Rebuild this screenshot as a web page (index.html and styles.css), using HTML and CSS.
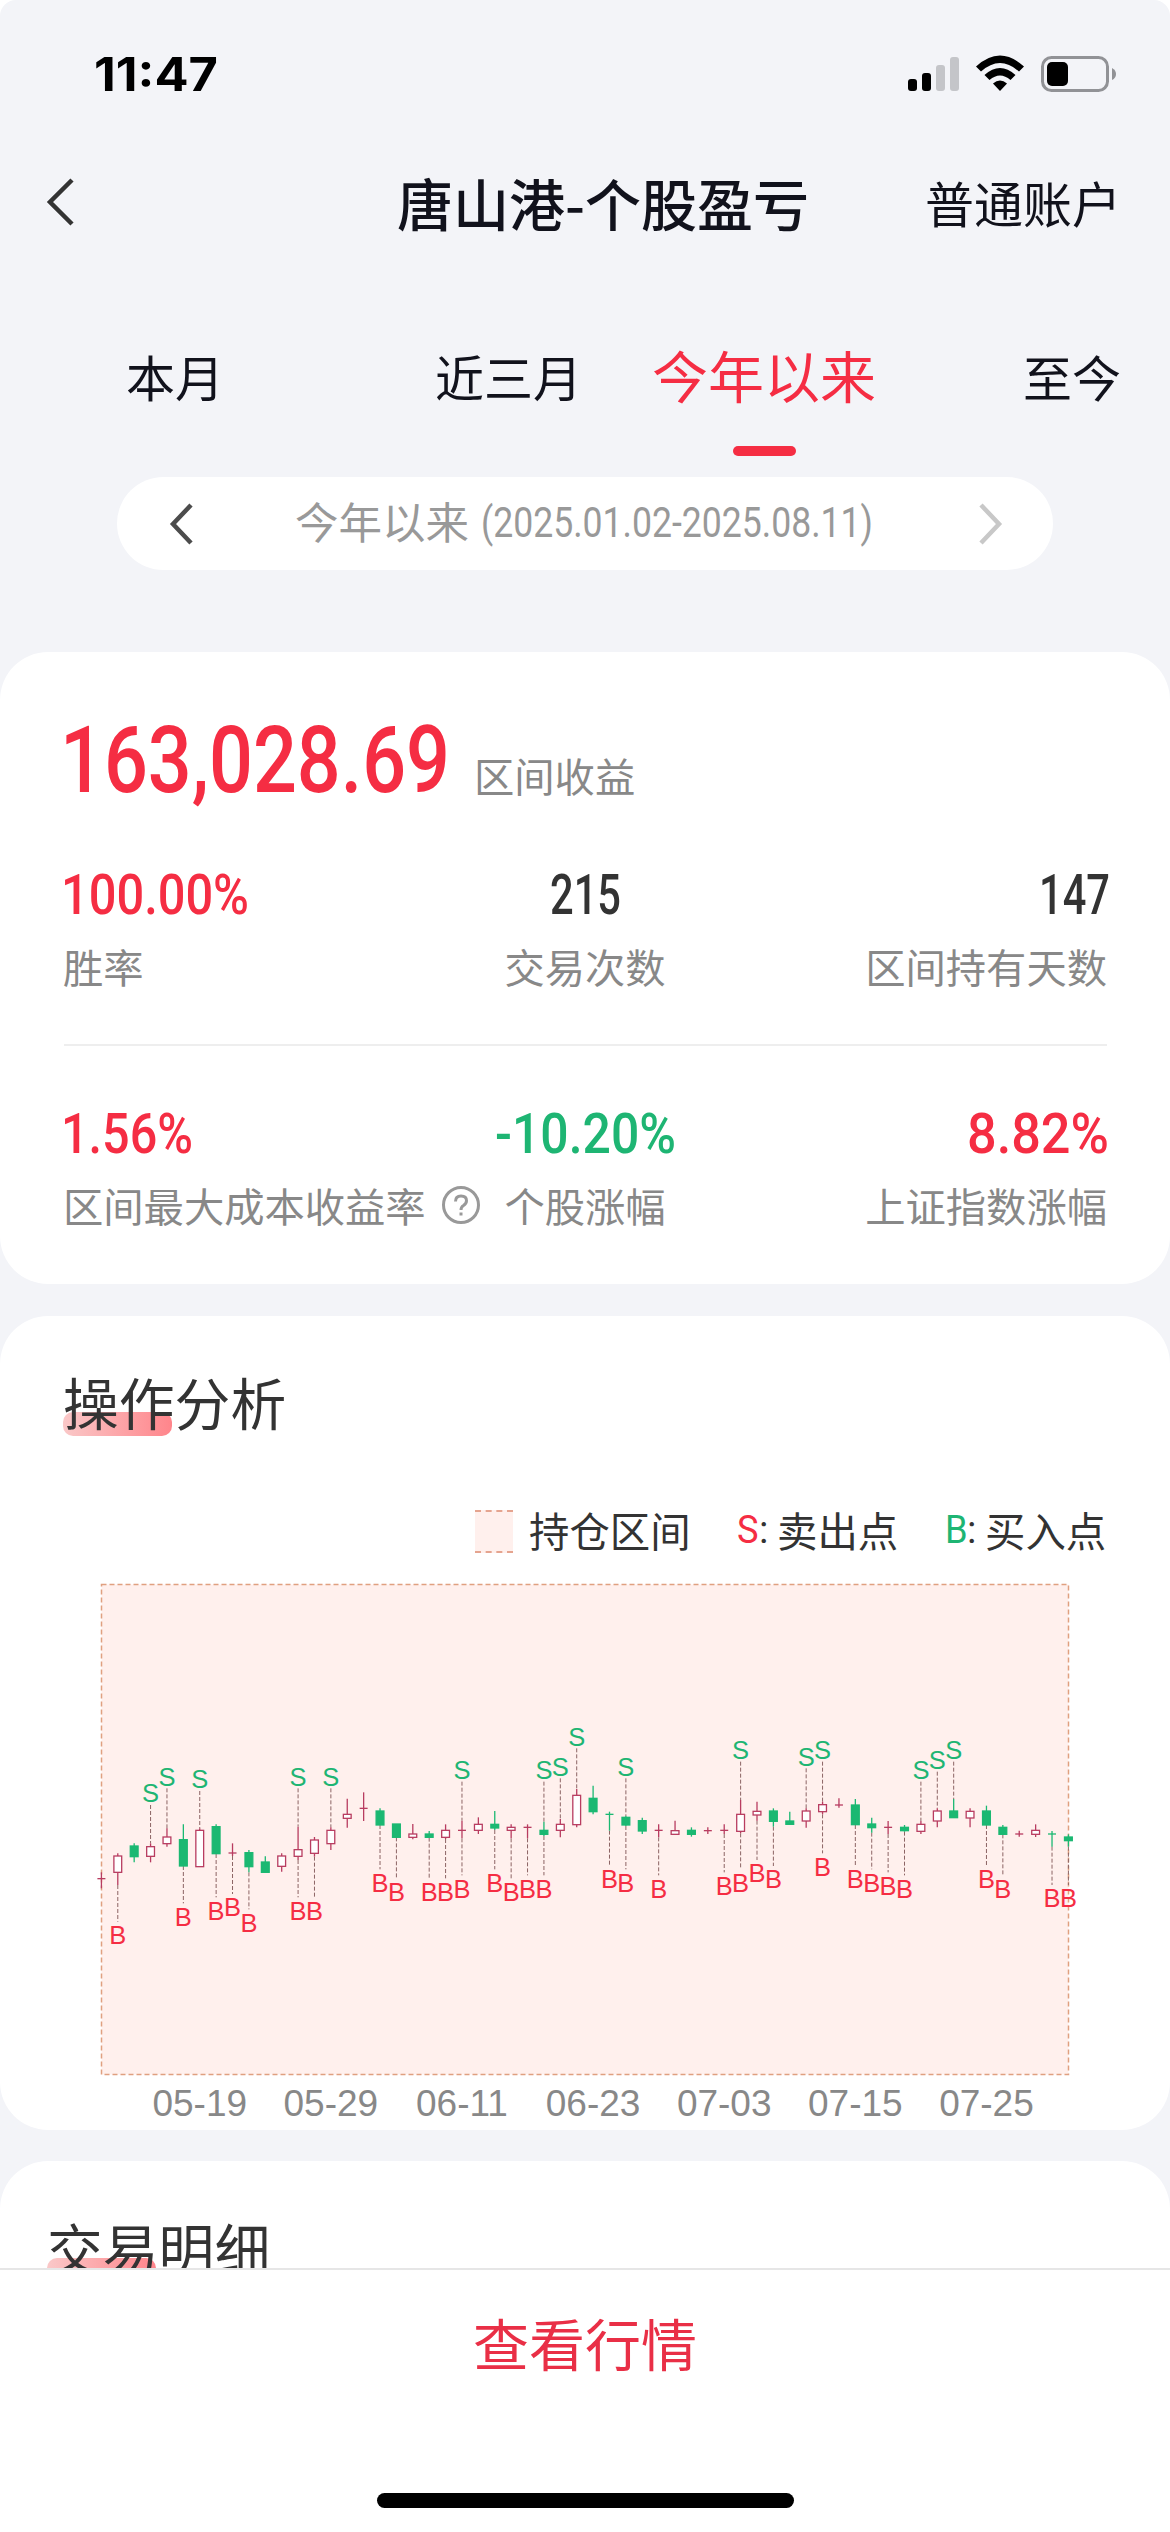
FILE: index.html
```html
<!DOCTYPE html>
<html lang="zh-CN">
<head>
<meta charset="utf-8">
<title>唐山港-个股盈亏</title>
<link rel="stylesheet" href="styles.css">
</head>
<body>
<div class="screen">
  <div class="status">
    <svg class="clock" width="130" height="50"><text x="0" y="40" textLength="124" lengthAdjust="spacingAndGlyphs">11:47</text></svg>
    <svg class="status-icons" width="212" height="40" viewBox="0 0 212 40">
      <rect x="0" y="24" width="9" height="12" rx="3"/>
      <rect x="14" y="18" width="9" height="18" rx="3"/>
      <rect x="28" y="10" width="9" height="26" rx="3" fill="#c4c5c9"/>
      <rect x="42" y="2" width="9" height="34" rx="3" fill="#c4c5c9"/>
      <path d="M68 11.5 Q92 -10.500 116 11.500 L111 16.500 Q92 -0.500 73 16.500 Z"/>
      <path d="M76.500 20 Q92 6 107.500 20 L102.500 25 Q92 16 81.500 25 Z"/>
      <path d="M85 28.500 Q92 22.500 99 28.500 L92 36 Z"/>
      <rect x="134.500" y="2.500" width="65" height="33" rx="9" fill="none" stroke="#919296" stroke-width="3"/>
      <rect x="139" y="7" width="21" height="24" rx="5"/>
      <path d="M204 13 Q208 15 208 19 T204 25 Z" fill="#919296"/>
    </svg>
  </div>
  <header class="nav">
    <svg class="back" width="30" height="48" viewBox="0 0 30 48"><path d="M26 2 L4 24 L26 46"/></svg>
    <h1>唐山港-个股盈亏</h1>
    <span class="account">普通账户</span>
  </header>
  <nav class="tabs">
    <span class="tab month">本月</span>
    <span class="tab quarter">近三月</span>
    <span class="tab active">今年以来</span>
    <span class="tab all">至今</span>
  </nav>
  <div class="range">
    <svg class="prev" width="26" height="42" viewBox="0 0 26 42"><path d="M22 2 L4 21 L22 40"/></svg>
    <span class="range-name">今年以来</span>
    <svg class="range-dates" width="394" height="50"><text x="0" y="38" textLength="392" lengthAdjust="spacingAndGlyphs">(2025.01.02-2025.08.11)</text></svg>
    <svg class="next" width="26" height="42" viewBox="0 0 26 42"><path d="M4 2 L22 21 L4 40"/></svg>
  </div>

  <section class="card summary">
    <div class="total">
      <svg class="big red" width="400" height="100"><text x="-4" y="80" textLength="390" lengthAdjust="spacingAndGlyphs">163,028.69</text></svg>
      <span class="label">区间收益</span>
    </div>
    <div class="stats">
      <div class="stat"><svg class="num red" width="200" height="56"><text x="-3" y="48" textLength="188" lengthAdjust="spacingAndGlyphs">100.00%</text></svg><span class="label">胜率</span></div>
      <div class="stat mid"><svg class="num" width="72" height="56"><text x="1" y="48" textLength="71" lengthAdjust="spacingAndGlyphs">215</text></svg><span class="label">交易次数</span></div>
      <div class="stat end"><svg class="num" width="72" height="56"><text x="4" y="48" textLength="71" lengthAdjust="spacingAndGlyphs">147</text></svg><span class="label">区间持有天数</span></div>
    </div>
    <div class="stats second">
      <div class="stat"><svg class="num red" width="200" height="56"><text x="-3" y="48" textLength="132" lengthAdjust="spacingAndGlyphs">1.56%</text></svg>
        <span class="label">区间最大成本收益率<svg class="help" width="40" height="40" viewBox="0 0 40 40"><circle cx="20" cy="20" r="17.500"/><path d="M14.500 16.500 Q14.500 11 20 11 Q25.500 11 25.500 15.800 Q25.500 18.500 22.500 20.500 Q20 22 20 25"/><path d="M20 27.500 V30.500"/></svg></span></div>
      <div class="stat mid"><svg class="num green" width="180" height="56"><text x="0" y="48" textLength="181" lengthAdjust="spacingAndGlyphs">-10.20%</text></svg><span class="label">个股涨幅</span></div>
      <div class="stat end"><svg class="num red" width="142" height="56"><text x="2" y="48" textLength="142" lengthAdjust="spacingAndGlyphs">8.82%</text></svg><span class="label">上证指数涨幅</span></div>
    </div>
  </section>

  <section class="card analysis">
    <h2>操作分析</h2>
    <div class="legend">
      <i class="swatch"></i><span class="hold">持仓区间</span>
      <span class="sell"><b class="red">S</b>:</span><span class="sell-text">卖出点</span>
      <span class="buy"><b class="green">B</b>:</span><span>买入点</span>
    </div>
    <svg id="chart" class="chart" width="1170" height="550" viewBox="0 1580 1170 550"></svg>
  </section>

  <section class="card details">
    <h2>交易明细</h2>
  </section>
  <footer>
    <span class="quote">查看行情</span>
    <i class="home"></i>
  </footer>
</div>
<script src="chart.js"></script>
</body>
</html>
```
FILE: styles.css
```css
* { box-sizing: border-box; margin: 0; padding: 0; }
body {
  width: 1170px;
  height: 2532px;
  overflow: hidden;
  background: #fff;
  font-family: "Noto Sans CJK SC", sans-serif;
  color: #333;
}
svg { display: block; flex: none; overflow: visible; }
h1, h2, b { font-weight: 400; }
.screen {
  display: flex;
  flex-direction: column;
  height: 2532px;
  background: #f3f4f8;
  border-radius: 16px 16px 0 0;
  overflow: hidden;
}
.red { color: #f52d43; fill: #f52d43; }
.green { color: #1eb573; fill: #1eb573; }

.status { height: 147px; padding: 51px 50px 0 94px; display: flex; justify-content: space-between; align-items: flex-start; flex: none; }
.clock text { font: 700 46px Inter, sans-serif; }
.status-icons { margin-top: 4px; }

.nav { height: 110px; padding: 0 49px 0 46px; display: flex; align-items: center; flex: none; }
.nav h1 { margin-left: 321px; font-size: 56px; line-height: 80px; font-weight: 500; color: #11121c; width: 420px; white-space: nowrap; }
.account { margin-left: auto; font-size: 49px; color: #11121c; line-height: 70px; }
.back path, .prev path, .next path { fill: none; stroke: #333; stroke-width: 4.500; }
.prev path { stroke: #4c4c4c; }
.next path { stroke: #c8c8c8; }

.tabs { height: 220px; flex: none; display: flex; padding: 82px 0 0 126px; color: #11121c; font-size: 49px; line-height: 74px; }
.tab { white-space: nowrap; }
.month { width: 309px; }
.quarter { width: 217px; }
.active { width: 224px; font-size: 56px; line-height: 74px; color: #f52d43; display: flex; flex-direction: column; align-items: center; margin-top: -2px; }
.active::after { content: ""; width: 63px; height: 10px; border-radius: 5px; background: #f52d43; margin-top: 35px; }
.all { margin-left: 147px; }

.range { width: 936px; height: 93px; margin: 0 auto; border-radius: 47px; background: #fff; display: flex; align-items: center; padding: 0 50px 0 52px; color: #999; fill: #999; flex: none; }
.range-name { font-size: 43.500px; width: 174px; margin: 0 0 5px 100px; line-height: 60px; }
.range-dates { margin-left: 12px; }
.range-dates text { font: 400 43px Roboto, sans-serif; }
.next { margin-left: auto; }

.card { background: #fff; border-radius: 48px; flex: none; }
.summary { margin-top: 82px; height: 632px; padding: 60px 63px 0 64px; }
.label { font-size: 40.300px; line-height: 56px; color: #888; white-space: nowrap; display: flex; align-items: center; }
.total { display: flex; height: 154px; }
.big text { font: 500 93px Roboto, sans-serif; }
.total .label { margin: 35px 0 0 10px; height: 56px; }
.stats { display: grid; grid-template-columns: 441px 160px 442px; height: 180px; border-bottom: 2px solid #eee; }
.stats.second { border: 0; padding-top: 59px; height: 230px; }
.stat { display: flex; flex-direction: column; gap: 16px; }
.stat:first-child .label { margin-left: -1px; }
.mid { align-items: center; }
.end { align-items: flex-end; }
.num text { font: 500 56px Roboto, sans-serif; }
.num:not(.red):not(.green) { fill: #333; }
.help { margin-left: 15px; fill: none; stroke: #999; stroke-width: 3; }

h2 { position: relative; z-index: 0; font-size: 55.800px; line-height: 80px; color: #333; width: max-content; }
h2::before { content: ""; position: absolute; z-index: -1; left: 0; top: 51px; width: 109px; height: 24px; border-radius: 10px; background: linear-gradient(90deg, #fac8c8, #ff858b); }
.analysis { margin-top: 32px; height: 814px; padding-top: 45px; }
.analysis h2 { margin-left: 63px; }
.legend { height: 60px; margin-top: 59px; padding: 0 62px 0 475px; display: flex; align-items: center; font-size: 40.400px; line-height: 60px; white-space: nowrap; }
.swatch { width: 38px; height: 43px; margin-top: 3px; background: #fff0ed; border: dashed #e5a48f; border-width: 2px 0; }
.hold { margin-left: 16px; width: 208px; }
.legend .sell, .legend .buy { font: 400 39px/60px Roboto, sans-serif; display: inline-flex; width: 40px; }
.legend b { display: block; width: 22px; transform: scaleX(.93); transform-origin: left; }
.sell-text { width: 168px; }
.chart { margin-top: 20px; }
.chart .plot { fill: #fff0ed; stroke: #e0a080; stroke-width: 1.500; stroke-dasharray: 5 3; }
.chart .mark { font: 25.500px "Liberation Sans", sans-serif; text-anchor: middle; }
.chart .axis { font: 37px "Liberation Sans", sans-serif; text-anchor: middle; fill: #888; }
.chart .lead { stroke: #8c6464; stroke-width: 1; stroke-dasharray: 4 2; }
.chart .up { fill: #fff; stroke: #b83c60; stroke-width: 1.300; }
.chart .down { fill: #1bb872; stroke: #1bb872; stroke-width: 1.300; }

.details { margin-top: 31px; height: 107px; padding: 46px 47px 0; border-radius: 48px 48px 0 0; overflow: hidden; }
footer { flex: none; height: 264px; border-top: 2px solid #e6e6e6; background: #fff; display: flex; flex-direction: column; align-items: center; }
.quote { color: #e92f46; font-size: 56px; line-height: 80px; margin-top: 32px; }
.home { width: 417px; height: 15px; border-radius: 8px; background: #000; margin-top: 111px; }
```
FILE: chart.js
```javascript
// Each row: colour, high, low, body top, body bottom, S mark, B mark (0 = none).
// Heights are thirds of a pixel below y = 1700.
const rows = [
  ['r',517,565,536,536,0,0], ['r',460,555,468,517,0,705], ['g',430,487,438,470,0,0],
  ['r',430,487,440,469,280,0], ['r',385,440,411,431,230,0], ['g',373,498,419,498,0,650],
  ['r',385,500,391,500,238,0], ['g',373,462,380,461,0,632], ['r',430,468,459,459,0,622],
  ['g',450,517,458,500,0,668], ['g',469,517,486,517,0,0], ['r',460,515,468,499,0,0],
  ['r',380,480,449,469,230,632], ['r',411,470,420,460,0,632], ['r',382,450,391,431,230,0],
  ['r',296,383,343,355,0,0], ['r',277,363,325,325,0,0], ['g',325,375,333,375,0,548],
  ['g',372,412,372,412,0,575], ['r',372,418,402,412,0,0], ['g',393,413,402,412,0,575],
  ['r',373,417,391,412,0,575], ['r',362,415,391,391,210,566], ['r',352,402,373,391,0,0],
  ['g',333,390,373,384,0,548], ['r',373,415,382,391,0,575], ['r',373,415,382,382,0,566],
  ['g',365,408,391,403,210,566], ['r',357,412,373,391,200,0], ['r',267,382,286,374,110,0],
  ['g',257,343,295,335,0,0], ['g',335,392,343,343,0,538], ['g',348,378,352,375,200,548],
  ['g',353,402,362,393,0,0], ['r',373,412,391,391,0,566], ['r',362,403,392,403,0,0],
  ['g',382,410,391,403,0,0], ['r',382,402,392,392,0,0], ['r',373,402,391,391,0,557],
  ['r',300,400,343,394,150,548], ['r',305,362,334,345,0,520], ['g',325,380,333,364,0,538],
  ['g',335,373,363,373,0,0], ['r',325,383,333,363,170,0], ['r',305,343,314,335,150,500],
  ['r',295,323,315,315,0,0], ['g',297,375,315,374,0,538], ['g',353,398,372,383,0,548],
  ['r',363,402,382,382,0,557], ['g',375,395,382,392,0,566], ['r',363,402,373,394,210,0],
  ['r',325,382,333,363,180,0], ['g',297,353,333,353,150,0], ['r',325,382,334,354,0,0],
  ['g',317,375,333,375,0,538], ['g',375,403,382,403,0,566], ['r',392,410,402,402,0,0],
  ['r',373,411,391,403,0,0], ['g',393,440,402,402,0,595], ['g',403,440,411,422,0,595]
];
const dates = ['05-19', '05-29', '06-11', '06-23', '07-03', '07-15', '07-25'];
const xOf = i => 101.4 + i * 16.39;
const yOf = v => 1700 + v / 3;
const line = (cls, x, a, b) => `<line class="${cls}" x1="${x}" x2="${x}" y1="${a}" y2="${b}"/>`;

let out = '<rect class="plot" x="101.5" y="1584.5" width="967" height="490"/>';
rows.forEach(([c, hi, lo, top, bottom, s, b], i) => {
  const x = xOf(i);
  const cls = c === 'r' ? 'up' : 'down';
  if (s) {
    out += line('lead', x, yOf(s + 35), yOf(hi));
    out += `<text class="mark green" x="${x}" y="${yOf(s) + 9}">S</text>`;
  }
  if (b) {
    out += line('lead', x, yOf(lo), yOf(b - 40));
    out += `<text class="mark red" x="${x}" y="${yOf(b) + 9}">B</text>`;
  }
  out += line(cls, x, yOf(hi), yOf(lo));
  out += top === bottom
    ? `<line class="${cls}" x1="${x - 4}" x2="${x + 4}" y1="${yOf(top)}" y2="${yOf(top)}"/>`
    : `<rect class="${cls}" x="${x - 3.9}" y="${yOf(top)}" width="7.800" height="${(bottom - top) / 3}"/>`;
});
dates.forEach((d, k) => {
  out += `<text class="axis" x="${xOf(6 + 8 * k)}" y="2116">${d}</text>`;
});
document.getElementById('chart').innerHTML = out;
```
